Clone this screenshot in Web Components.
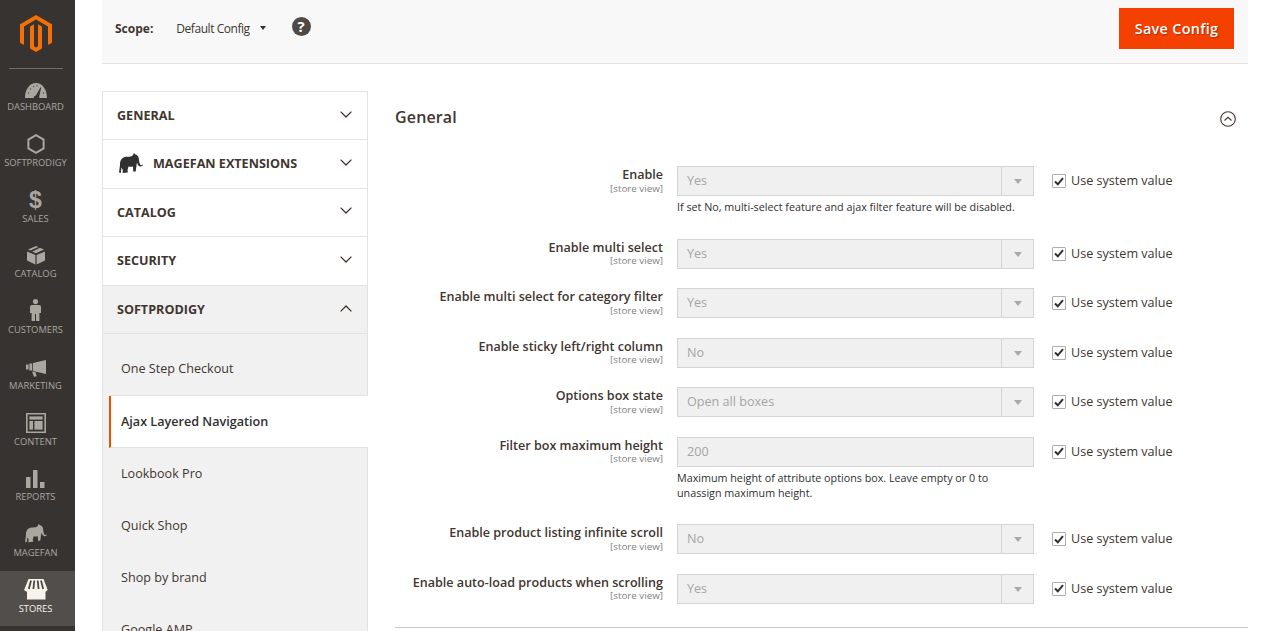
<!DOCTYPE html>
<html><head><meta charset="utf-8"><title>Config</title>
<style>
html,body{margin:0;height:631px;overflow:hidden;background:#fff;font-family:"Open Sans",sans-serif;color:#41362f}
body{display:flex}
</style></head><body>
<admin-sidebar></admin-sidebar>
<admin-main></admin-main>
<script>
const ICONS={
dashboard:'<svg width="22" height="15" viewBox="0 0 22 15"><path fill="#aaa6a0" d="M0 15C0 6 5 0 11 0s11 6 11 15H14.400l-.2-1.500 2-9-.7-.3-4.600 8.200c-1.200.2-2.200 1.200-2.200 2.600z"/><g fill="#514e4b"><circle cx="3.500" cy="10" r=".7"/><circle cx="5.500" cy="6" r=".7"/><circle cx="8.500" cy="3.500" r=".7"/><circle cx="12" cy="2.800" r=".7"/><circle cx="18.500" cy="10" r=".7"/></g></svg>',
hex:'<svg width="18" height="20" viewBox="0 0 18 20"><path fill="none" stroke="#aaa6a0" stroke-width="2" d="M9 1.200l7.600 4.400v8.800L9 18.800l-7.600-4.400V5.600z"/></svg>',
sales:'<span style="font:700 23px/20px \'Liberation Sans\',sans-serif;color:#aaa6a0">$</span>',
catalog:'<svg width="18" height="19" viewBox="0 0 18 19"><g fill="#aaa6a0"><path d="M0 5.400L8.400 9v9.600L0 14.600z"/><path d="M18 5.400L9.600 9v9.600l8.400-4z"/><path d="M9 0l2.400 1-7.900 3.500L1 3.600z"/><path d="M13 1.800l4 1.700-8 3.800-3.800-1.600z"/></g></svg>',
customers:'<svg width="11" height="22" viewBox="0 0 11 22"><g fill="#aaa6a0"><circle cx="5.500" cy="2.600" r="2.600"/><path d="M2 6h7c1.200 0 2 .8 2 2v6H9.400v8H6V15H5v7H1.600v-8H0V8c0-1.200.8-2 2-2z"/></g></svg>',
marketing:'<svg width="20" height="17" viewBox="0 0 20 17"><g fill="#aaa6a0"><path d="M20 0v14L7 11V3z"/><rect x="0" y="4.500" width="2.600" height="5"/><rect x="3.400" y="3.500" width="2.800" height="7"/><path d="M6 11.400l3.600.8 1 4-2.600.6z"/></g></svg>',
content:'<svg width="20" height="20" viewBox="0 0 20 20"><g fill="#aaa6a0"><path fill-rule="evenodd" d="M0 0h20v20H0zM1.600 1.600v16.800h16.800V1.600z"/><rect x="3.400" y="3.400" width="13.200" height="3.200"/><rect x="3.400" y="8" width="3.600" height="8.600"/><rect x="8.400" y="8" width="8.200" height="8.600"/></g></svg>',
reports:'<svg width="19" height="18" viewBox="0 0 19 18"><g fill="#aaa6a0"><rect x="0" y="7" width="4.500" height="11"/><rect x="7" y="0" width="4.500" height="18"/><rect x="14" y="12" width="4.500" height="6"/></g></svg>',
elephant:'<svg width="22" height="20" viewBox="0 0 24 22"><path fill="currentColor" d="M15 0l1.500 1.500c2 .5 3 2 3.300 4 .3 2.500.5 5 1.800 6.500.8.500 1.800 0 2.400-.8l.5.4c-.7 1.300-2 2.200-3.500 1.800-1.800-.5-2.500-2.300-3-4l-.5 3-.8 6h-2.500l-.2-5c-1.500.5-3 .5-4.500 0l-1 3.500.3 2.500-5.200.6.200-3-1.300-2.500L1.800 20 0 19.500 1 12C.7 7.500 3 4.500 6 4c3.500-.5 6 .5 8-2z"/></svg>',
stores:'<svg width="24" height="21" viewBox="0 0 24 21"><rect x="3" y="10" width="18.500" height="10.500" fill="#f7f3eb"/><path fill="#f7f3eb" d="M4.500 0h15l4 10.500c0 1.500-1.300 2-2.400 2H3c-1.300 0-2.700-.6-2.700-2z"/><g stroke="#4d4a46" stroke-width="1.800" fill="none"><path d="M7 1.500L4.800 10M10.300 1.500L9.400 10M13.700 1.500l.9 8.500M17 1.500l2.200 8.500"/></g></svg>'
};
const chev=(up)=>`<svg width="12" height="7" viewBox="0 0 12 7"><path fill="none" stroke="#41362f" stroke-width="1.300" d="${up?'M.6 6.400L6 1l5.400 5.400':'M.6.600L6 6 11.400.600'}"/></svg>`;
function def(name,css,html){
  customElements.define(name,class extends HTMLElement{
    connectedCallback(){
      if(this.shadowRoot)return;
      const r=this.attachShadow({mode:'open'});
      r.innerHTML=`<style>${css}</style>`+(typeof html==='function'?html(this):html);
    }
  });
}
def('side-item',`
:host{display:flex;flex-direction:column;align-items:center;height:55.78px;box-sizing:border-box;padding:8.300px 4px 0 0;color:#aaa6a0;font-size:9.400px;line-height:14px;text-transform:uppercase;white-space:nowrap}
:host([active]){background:#514e4b;color:#f7f3eb}
.i{height:21px;display:flex;align-items:flex-end;justify-content:center;margin-bottom:2px;color:inherit}
`,el=>`<div class="i">${ICONS[el.getAttribute('icon')]}</div><div><slot></slot></div>`);
def('admin-sidebar',`
:host{display:block;width:75px;flex:none;height:631px;background:#373330;box-sizing:border-box}
.logo{height:67.700px;display:flex;justify-content:center;padding:15px 4px 0 0;box-sizing:border-box}
.rule{height:1px;background:#736a62;margin:0 12px 0 9px}
`,`<div class="logo"><svg width="32" height="37" viewBox="0 0 32 37"><path fill="#f46f06" fill-rule="evenodd" d="M16 0L32 9.200V27.700l-4 2.300V11.500L16 4.600 4 11.500V30l-4-2.300V9.200z"/><path fill="#f46f06" d="M16 37l-6-3.500V11.600l4-2.300v21.900l2 1.200 2-1.200V9.300l4 2.300v21.900z"/></svg></div><div class="rule"></div>
<side-item icon="dashboard">Dashboard</side-item>
<side-item icon="hex">Softprodigy</side-item>
<side-item icon="sales">Sales</side-item>
<side-item icon="catalog">Catalog</side-item>
<side-item icon="customers">Customers</side-item>
<side-item icon="marketing">Marketing</side-item>
<side-item icon="content">Content</side-item>
<side-item icon="reports">Reports</side-item>
<side-item icon="elephant">Magefan</side-item>
<side-item icon="stores" active>Stores</side-item>`);
def('scope-bar',`
:host{display:flex;align-items:center;height:64px;background:#f8f8f8;border-bottom:1px solid #e3e3e3;box-sizing:border-box;padding:0 14px 8px 13px;font-size:12px;color:#41362f}
b{font-weight:700;margin-right:23px;position:relative;top:1px}
.v{letter-spacing:-.45px;position:relative;top:1px}
.tri{width:0;height:0;border:3.500px solid transparent;border-top:4px solid #303030;border-bottom:0;margin:0 26px 0 10px}
.q{width:19px;height:19px;border-radius:50%;background:#514943;color:#fff;font:700 15px/19px "Open Sans",sans-serif;text-align:center;margin-top:-2px}
button{margin-left:auto;margin-top:2px;width:115px;height:41px;background:#f44000;border:0;color:#fff;font:600 14.400px "Open Sans",sans-serif;letter-spacing:.3px;text-shadow:1px 1px 1px rgba(0,0,0,.3);padding:0}
`,`<b>Scope:</b><span class="v">Default Config</span><span class="tri"></span><span class="q">?</span><button>Save Config</button>`);
def('nav-head',`
:host{display:flex;align-items:center;height:48.400px;box-sizing:border-box;border-bottom:1px solid #e3e3e3;padding:0 15px 0 14px;font-weight:700;font-size:12.600px;color:#41362f;text-transform:uppercase;background:#fff}
:host([open]){background:#f1f1f1}
.e{display:flex;margin-right:10px;color:#303030;margin-left:2px}
.c{margin-left:auto;display:flex;margin-top:-3px}
:host([open]) .c{margin-top:-1px}
.t{position:relative}
:host([logo]) .t{top:-1px}
`,el=>`${el.hasAttribute('logo')?`<span class="e">${ICONS.elephant.replace('width="22" height="20"','width="24" height="22"')}</span>`:''}<span class="t"><slot></slot></span><span class="c">${chev(el.hasAttribute('open'))}</span>`);
def('nav-link',`
:host{display:flex;align-items:center;height:52px;margin-left:6px;padding-left:12px;font-size:12.600px;color:#41362f;box-sizing:border-box;background:#f1f1f1}
:host([first]){height:62px;padding-top:8px;border-bottom:1px solid #e3e3e3}
:host([on]){background:#fff;border-left:2px solid #eb5202;padding-left:10px;font-weight:600;color:#303030;border-bottom:1px solid #e3e3e3;margin-right:-1px}
`,`<slot></slot>`);
def('admin-nav',`
:host{display:block;width:266px;flex:none;height:560px;box-sizing:border-box;border:1px solid #e3e3e3;border-bottom:0;background:#fff}
.sub{background:#f1f1f1}
`,`<nav-head>General</nav-head><nav-head logo>Magefan Extensions</nav-head><nav-head>Catalog</nav-head><nav-head>Security</nav-head><nav-head open>SoftProdigy</nav-head>
<div class="sub"><nav-link first>One Step Checkout</nav-link><nav-link on>Ajax Layered Navigation</nav-link><nav-link>Lookbook Pro</nav-link><nav-link>Quick Shop</nav-link><nav-link>Shop by brand</nav-link><nav-link>Google AMP</nav-link></div>`);
def('config-row',`
:host{display:grid;grid-template-columns:268px 357px auto;column-gap:14px;align-items:start;padding-bottom:var(--pb,19.500px);font-size:12px}
.l{text-align:right;padding-top:2px}
.t{font-weight:600;font-size:12.550px;color:#41362f;display:block;line-height:14px}
.s{font-size:9.800px;color:#808080;display:block;line-height:10px;margin-top:1.500px}
.f{height:30px;box-sizing:border-box;border:1px solid #d4d4d4;background:#f0f0f0;color:#a5a5a5;font-size:12.600px;line-height:27px;padding-left:9px;position:relative}
.f.sel::after{content:"";position:absolute;right:0;top:0;bottom:0;width:31px;border-left:1px solid #d4d4d4}
.f.sel::before{content:"";position:absolute;right:11px;top:12px;border:4px solid transparent;border-top:5px solid #a9a9a9;border-bottom:0;z-index:1}
.n{font-size:10.750px;line-height:15px;color:#303030;margin-top:4px}
.u{display:flex;align-items:center;height:29px;margin-left:4px;color:#41362f;font-size:12.600px;white-space:nowrap}
.b{width:14px;height:14px;box-sizing:border-box;border:1px solid #adadad;border-radius:1px;background:#fff;margin:1px 5px 0 0;display:flex;align-items:center;justify-content:center}
`,el=>{const n=el.getAttribute('note');const inp=el.hasAttribute('input');return `<div class="l"><span class="t">${el.getAttribute('label')}</span><span class="s">[store view]</span></div>
<div><div class="f ${inp?'':'sel'}">${el.getAttribute('value')}</div>${n?`<div class="n">${n}</div>`:''}</div>
<div class="u"><span class="b"><svg width="10" height="9" viewBox="0 0 10 9"><path fill="none" stroke="#303030" stroke-width="2" d="M1 4.500L3.800 7.300 9 1.200"/></svg></span>Use system value</div>`});
def('config-panel',`
:host{display:block;flex:1;min-width:0;margin-left:27px}
.h{display:flex;align-items:center;justify-content:space-between;height:75px;padding:0 12px 23px 0;font-size:16px;font-weight:600;color:#41362f;letter-spacing:.15px;box-sizing:border-box}
.h svg{display:block;margin-top:4px}
hr{border:0;border-top:1px solid #c8c8c8;margin:3.500px 0 0}
`,`<div class="h"><span>General</span><svg width="16" height="16" viewBox="0 0 16 16"><circle cx="8" cy="8" r="7.300" fill="none" stroke="#41362f" stroke-width="1.100"/><path fill="none" stroke="#41362f" stroke-width="1.100" d="M4.500 9.500L8 6.300l3.500 3.200"/></svg></div>
<div>
<config-row label="Enable" value="Yes" note="If set No, multi-select feature and ajax filter feature will be disabled." style="--pb:23.800px"></config-row>
<config-row label="Enable multi select" value="Yes"></config-row>
<config-row label="Enable multi select for category filter" value="Yes"></config-row>
<config-row label="Enable sticky left/right column" value="No"></config-row>
<config-row label="Options box state" value="Open all boxes"></config-row>
<config-row label="Filter box maximum height" value="200" input note="Maximum height of attribute options box. Leave empty or 0 to unassign maximum height." style="--pb:23.500px"></config-row>
<config-row label="Enable product listing infinite scroll" value="No"></config-row>
<config-row label="Enable auto-load products when scrolling" value="Yes"></config-row>
</div><hr>`);
def('admin-main',`
:host{display:block;flex:1;min-width:0;padding:0 27px;height:631px;overflow:hidden}
.w{display:flex;margin-top:27px;align-items:flex-start}
`,`<scope-bar></scope-bar><div class="w"><admin-nav></admin-nav><config-panel></config-panel></div>`);
</script>
</body></html>
